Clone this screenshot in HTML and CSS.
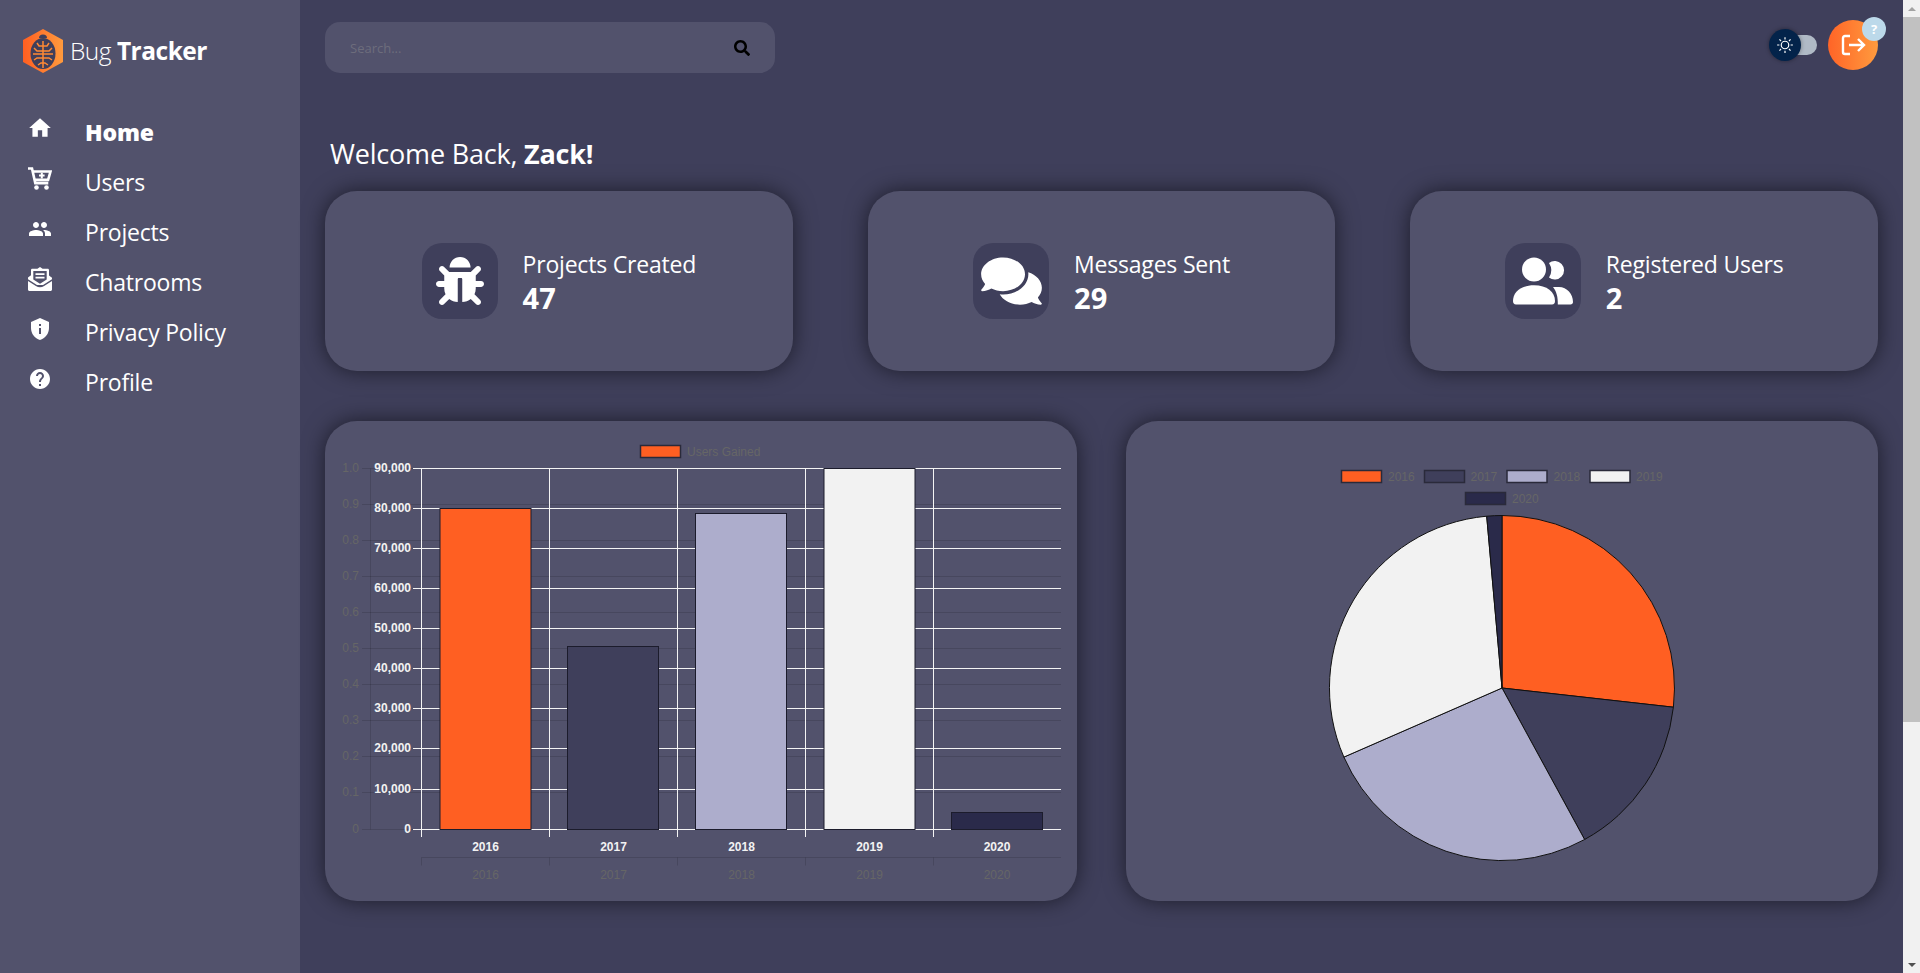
FILE: index.html
```html
<!DOCTYPE html>
<html>
<head>
    <meta charset="UTF-8">
    <meta name="viewport" content="width=device-width, initial-scale=1.0">
    <title>Bug Tracker</title>
    <link rel="stylesheet" href="styles.css">
</head>
<body>
    <!-- Sidebar -->
    <aside class="sidebar">
        <div class="brand">
            <svg class="brand-logo" viewBox="0 0 40 44">
                <defs>
                    <linearGradient id="orange" x1="0" y1="0" x2="1" y2="0">
                        <stop offset="0" stop-color="#ff5f22"/>
                        <stop offset="1" stop-color="#ff9a3d"/>
                    </linearGradient>
                </defs>
                <polygon points="20,0 40,11 40,33 20,44 0,33 0,11" fill="url(#orange)"/>
                <ellipse cx="20" cy="24.5" rx="12.500" ry="15.500" fill="#3f3f5b"/>
                <path d="M16 9a4 3.500 0 0 1 8 0z" fill="#3f3f5b"/>
                <path d="M20 12v27M14 14l2 3h8l2-3M11 19l3 3h12l3-3M10 25h20M11 31l3-2h12l3 2M15 36l3-2h4l3 2" stroke="#ff8a35" stroke-width="1.500" fill="none"/>
            </svg>
            <span class="brand-name">Bug <b>Tracker</b></span>
        </div>
        <nav class="nav">
            <a class="nav-item nav-item-active" href="#home">
                <svg class="nav-icon nav-icon-home" viewBox="0 0 24 24"><path d="M10 20v-6h4v6h5v-8h3L12 3 2 12h3v8z"/></svg>
                <span>Home</span>
            </a>
            <a class="nav-item" href="#users">
                <svg class="nav-icon" viewBox="0 0 24 24">
                    <path class="cart-line" d="M0 1.500h4l3.300 14.600h13M5 4.500h17.500l-2.400 8.400H7.200"/>
                    <path class="cart-plus" d="M13.800 5.800v5.600M11 8.600h5.600"/>
                    <circle cx="8.500" cy="20.500" r="2.300"/>
                    <circle cx="18.500" cy="20.500" r="2.300"/>
                </svg>
                <span>Users</span>
            </a>
            <a class="nav-item" href="#projects">
                <svg class="nav-icon" viewBox="0 0 24 24"><path d="M16 11c1.660 0 2.990-1.340 2.990-3S17.660 5 16 5c-1.660 0-3 1.340-3 3s1.340 3 3 3zm-8 0c1.660 0 2.990-1.340 2.990-3S9.660 5 8 5C6.340 5 5 6.340 5 8s1.340 3 3 3zm0 2c-2.330 0-7 1.170-7 3.500V19h14v-2.500c0-2.330-4.670-3.500-7-3.500zm8 0c-.29 0-.62.02-.97.05 1.160.84 1.970 1.970 1.970 3.450V19h6v-2.500c0-2.330-4.670-3.500-7-3.500z"/></svg>
                <span>Projects</span>
            </a>
            <a class="nav-item" href="#chatrooms">
                <svg class="nav-icon" viewBox="0 0 24 24">
                    <path fill-rule="evenodd" d="M12 0l2.600 1.800h5.100c.8 0 1.300.6 1.300 1.300v5.300l3 2.300v1.500L15 18H9l-9-5.800v-1.700l3-2.300V3.100c0-.7.5-1.300 1.300-1.300h5.100zM5.300 4v8.500l6.700 4.300 6.700-4.300V4z"/>
                    <path d="M7.500 6.200h9V8h-9zM7.500 9.700h9v1.800h-9z"/>
                    <path d="M0 14l7.900 5c2.500 1.600 5.700 1.600 8.200 0L24 14v8.500c0 .9-.7 1.500-1.500 1.500h-21C.7 24 0 23.400 0 22.500z"/>
                </svg>
                <span>Chatrooms</span>
            </a>
            <a class="nav-item" href="#privacy">
                <svg class="nav-icon" viewBox="0 0 24 24"><path d="M12 1 3 5v6c0 5.550 3.840 10.740 9 12 5.160-1.260 9-6.450 9-12V5l-9-4zm1 16h-2v-6h2v6zm0-8h-2V7h2v2z"/></svg>
                <span>Privacy Policy</span>
            </a>
            <a class="nav-item" href="#profile">
                <svg class="nav-icon" viewBox="0 0 24 24"><path d="M12 2C6.480 2 2 6.480 2 12s4.480 10 10 10 10-4.480 10-10S17.520 2 12 2zm1 17h-2v-2h2v2zm2.070-7.750l-.9.920C13.450 12.900 13 13.500 13 15h-2v-.5c0-1.100.45-2.100 1.170-2.830l1.240-1.260c.37-.36.59-.86.59-1.410 0-1.100-.9-2-2-2s-2 .9-2 2H8c0-2.210 1.790-4 4-4s4 1.790 4 4c0 .88-.36 1.680-.93 2.250z"/></svg>
                <span>Profile</span>
            </a>
        </nav>
    </aside>

    <main class="main">
        <!-- Top bar -->
        <div class="topbar">
            <div class="search">
                <span class="search-text">Search...</span>
                <svg class="search-icon" viewBox="0 0 512 512"><path d="M505 442.700L405.300 343c-4.500-4.500-10.600-7-17-7H372c27.600-35.300 44-79.700 44-128C416 93.100 322.900 0 208 0S0 93.100 0 208s93.100 208 208 208c48.300 0 92.700-16.400 128-44v16.300c0 6.400 2.500 12.500 7 17l99.700 99.700c9.400 9.400 24.600 9.400 33.900 0l28.300-28.300c9.400-9.400 9.400-24.600.1-34zM208 336c-70.700 0-128-57.200-128-128 0-70.700 57.200-128 128-128 70.700 0 128 57.200 128 128 0 70.700-57.200 128-128 128z"/></svg>
            </div>
            <div class="top-actions">
                <div class="toggle">
                    <span class="toggle-knob">
                        <svg class="sun" viewBox="0 0 24 24"><circle cx="12" cy="12" r="5"/><path d="M12 1.500v3M12 19.500v3M1.500 12h3M19.500 12h3M4.600 4.600l2.100 2.100M17.300 17.300l2.100 2.100M4.600 19.400l2.100-2.100M17.300 6.700l2.100-2.100"/></svg>
                    </span>
                </div>
                <div class="logout">
                    <svg class="logout-icon" viewBox="0 0 26 24"><path d="M10 3H5a2 2 0 0 0-2 2v14a2 2 0 0 0 2 2h5M9 12h15M18 6l6 6-6 6"/></svg>
                    <span class="logout-badge">?</span>
                </div>
            </div>
        </div>

        <h1 class="welcome">Welcome Back, <b>Zack!</b></h1>

        <!-- Stat cards -->
        <section class="stats">
            <div class="stat-card">
                <div class="stat-icon">
                    <svg class="icon-bug" viewBox="0 0 512 512"><path d="M511.988 288.900c-.478 17.430-15.217 31.100-32.653 31.100H424v16c0 21.864-4.882 42.584-13.600 61.145l60.228 60.228c12.496 12.497 12.496 32.758 0 45.255-12.498 12.497-32.759 12.496-45.256 0l-54.736-54.736C345.886 467.965 314.351 480 280 480V236c0-6.627-5.373-12-12-12h-24c-6.627 0-12 5.373-12 12v244c-34.351 0-65.886-12.035-90.636-32.108l-54.736 54.736c-12.496 12.497-32.758 12.498-45.256 0-12.496-12.497-12.496-32.758 0-45.255l60.228-60.228C92.882 378.584 88 357.864 88 336v-16H32.666C15.230 320 .491 306.330.013 288.900-.484 270.816 14.028 256 32 256h56v-58.745l-46.628-46.628c-12.496-12.497-12.496-32.758 0-45.255 12.498-12.497 32.758-12.497 45.256 0L141.255 160h229.489l54.627-54.627c12.498-12.497 32.758-12.497 45.256 0 12.496 12.497 12.496 32.758 0 45.255L424 197.255V256h56c17.972 0 32.484 14.816 31.988 32.900zM257 0c-61.856 0-112 50.144-112 112h224C369 50.144 318.856 0 257 0z"/></svg>
                </div>
                <div class="stat-text">
                    <span class="stat-label">Projects Created</span>
                    <span class="stat-value">47</span>
                </div>
            </div>
            <div class="stat-card">
                <div class="stat-icon">
                    <svg class="icon-comments" viewBox="0 0 576 512"><path d="M416 192c0-88.400-93.100-160-208-160S0 103.600 0 192c0 34.300 14.100 65.900 38 92-13.400 30.200-35.500 54.200-35.800 54.500-2.200 2.300-2.800 5.700-1.500 8.700S4.800 352 8 352c36.600 0 66.900-12.300 88.700-25 32.200 15.700 70.300 25 111.300 25 114.900 0 208-71.600 208-160zm122 220c23.900-26 38-57.700 38-92 0-66.900-53.500-124.200-129.300-148.100.9 6.600 1.300 13.300 1.300 20.100 0 105.900-107.700 192-240 192-10.800 0-21.300-.8-31.700-1.900C207.800 439.600 281.800 480 368 480c41 0 79.100-9.200 111.300-25 21.800 12.700 52.100 25 88.700 25 3.200 0 6.100-1.900 7.300-4.800 1.300-2.900.7-6.300-1.500-8.700-.3-.3-22.400-24.200-35.800-54.500z"/></svg>
                </div>
                <div class="stat-text">
                    <span class="stat-label">Messages Sent</span>
                    <span class="stat-value">29</span>
                </div>
            </div>
            <div class="stat-card">
                <div class="stat-icon">
                    <svg class="icon-users" viewBox="0 0 60 48">
                        <circle cx="21" cy="12.500" r="12"/>
                        <path d="M36 6A9.300 9.300 0 1 1 36 20.600A13.500 13.500 0 0 0 36 6Z"/>
                        <path d="M0 44C0 35 8 28.300 21 28.300S42 35 42 44C42 46 41 47.500 39 47.500H3C1 47.500 0 46 0 44Z"/>
                        <path d="M40 30H46C54 30 60 37 60 45C60 46.500 59 47.500 57.500 47.500H44.800C45 40 43.500 34.500 40 30Z"/>
                    </svg>
                </div>
                <div class="stat-text">
                    <span class="stat-label">Registered Users</span>
                    <span class="stat-value">2</span>
                </div>
            </div>
        </section>

        <!-- Charts -->
        <section class="charts">
            <div class="chart-card">
                <svg class="chart" viewBox="0 0 752 480">
                    <!-- empty default axes behind the real ones -->
                    <g class="ghost-lines">
                        <path d="M45.500 47.500V408.500M37 47.500H736M37 83.500H736M37 119.500H736M37 155.500H736M37 191.500H736M37 227.500H736M37 263.500H736M37 299.500H736M37 335.500H736M37 371.500H736M37 408.500H736"/>
                        <path d="M96.500 436.500H736M96.500 436.500v8M224.500 436.500v8M352.500 436.500v8M480.500 436.500v8M608.500 436.500v8"/>
                    </g>
                    <g class="ghost-text ghost-y">
                        <text x="34" y="51">1.0</text>
                        <text x="34" y="87">0.9</text>
                        <text x="34" y="123">0.8</text>
                        <text x="34" y="159">0.7</text>
                        <text x="34" y="195">0.6</text>
                        <text x="34" y="231">0.5</text>
                        <text x="34" y="267">0.4</text>
                        <text x="34" y="303">0.3</text>
                        <text x="34" y="339">0.2</text>
                        <text x="34" y="375">0.1</text>
                        <text x="34" y="412">0</text>
                    </g>
                    <g class="ghost-text ghost-x">
                        <text x="160.500" y="458">2016</text>
                        <text x="288.500" y="458">2017</text>
                        <text x="416.500" y="458">2018</text>
                        <text x="544.500" y="458">2019</text>
                        <text x="672" y="458">2020</text>
                    </g>
                    <!-- grid -->
                    <path class="grid" d="M88 47.500H736M88 87.500H736M88 127.500H736M88 167.500H736M88 207.500H736M88 247.500H736M88 287.500H736M88 327.500H736M88 368.500H736M88 408.500H736M96.500 47V416M224.500 47V416M352.500 47V416M480.500 47V416M608.500 47V416"/>
                    <!-- bars -->
                    <rect class="bar" x="115" y="87.500" width="91" height="321" fill="#ff5f22"/>
                    <rect class="bar" x="242.500" y="225.500" width="91" height="183" fill="#3f3f5b"/>
                    <rect class="bar" x="370.500" y="92.500" width="91" height="316" fill="#adadcc"/>
                    <rect class="bar" x="499" y="47.500" width="91" height="361" fill="#f2f2f2"/>
                    <rect class="bar" x="626.500" y="391.500" width="91" height="17" fill="#2a2a4a"/>
                    <!-- axis labels -->
                    <g class="tick tick-y">
                        <text x="86" y="50.500">90,000</text>
                        <text x="86" y="90.500">80,000</text>
                        <text x="86" y="130.500">70,000</text>
                        <text x="86" y="170.500">60,000</text>
                        <text x="86" y="210.500">50,000</text>
                        <text x="86" y="250.500">40,000</text>
                        <text x="86" y="290.500">30,000</text>
                        <text x="86" y="330.500">20,000</text>
                        <text x="86" y="371.500">10,000</text>
                        <text x="86" y="411.500">0</text>
                    </g>
                    <g class="tick tick-x">
                        <text x="160.500" y="430">2016</text>
                        <text x="288.500" y="430">2017</text>
                        <text x="416.500" y="430">2018</text>
                        <text x="544.500" y="430">2019</text>
                        <text x="672" y="430">2020</text>
                    </g>
                    <!-- legend -->
                    <rect class="swatch" x="315.500" y="24.500" width="40" height="12" fill="#ff5f22"/>
                    <text class="legend-text" x="362" y="34.500">Users Gained</text>
                </svg>
            </div>
            <div class="chart-card">
                <svg class="chart" viewBox="0 0 752 480">
                    <rect class="swatch" x="215.500" y="49.500" width="40" height="12" fill="#ff5f22"/>
                    <text class="legend-text" x="262" y="60">2016</text>
                    <rect class="swatch" x="298.500" y="49.500" width="40" height="12" fill="#3f3f5b"/>
                    <text class="legend-text" x="344.500" y="60">2017</text>
                    <rect class="swatch" x="381" y="49.500" width="40" height="12" fill="#adadcc"/>
                    <text class="legend-text" x="427.500" y="60">2018</text>
                    <rect class="swatch" x="464" y="49.500" width="40" height="12" fill="#f2f2f2"/>
                    <text class="legend-text" x="510" y="60">2019</text>
                    <rect class="swatch" x="339.500" y="71.500" width="40" height="12" fill="#2a2a4a"/>
                    <text class="legend-text" x="386" y="82">2020</text>
                    <!-- pie slices -->
                    <path class="slice" d="M376 267L376 94.500A172.500 172.500 0 0 1 547.400 286.200Z" fill="#ff5f22"/>
                    <path class="slice" d="M376 267L547.400 286.200A172.500 172.500 0 0 1 458.600 418.500Z" fill="#3f3f5b"/>
                    <path class="slice" d="M376 267L458.600 418.500A172.500 172.500 0 0 1 217.900 336.100Z" fill="#adadcc"/>
                    <path class="slice" d="M376 267L217.900 336.100A172.500 172.500 0 0 1 360.700 95.200Z" fill="#f2f2f2"/>
                    <path class="slice" d="M376 267L360.700 95.200A172.500 172.500 0 0 1 376 94.500Z" fill="#2a2a4a"/>
                </svg>
            </div>
        </section>
    </main>

    <!-- Window scrollbar -->
    <div class="scrollbar">
        <span class="scroll-arrow scroll-arrow-up"></span>
        <div class="scroll-track"><div class="scroll-thumb"></div></div>
        <span class="scroll-arrow scroll-arrow-down"></span>
    </div>
</body>
</html>
```
FILE: styles.css
```css
html, body {
    height: 100%;
}
body {
    margin: 0;
    display: flex;
    overflow: hidden;
    background-color: #3f3f5b;
    color: white;
    font-family: "Open Sans", "Noto Sans", sans-serif;
}

/* Sidebar */
.sidebar {
    width: 300px;
    flex-shrink: 0;
    background-color: #52526c;
}
.brand {
    display: flex;
    align-items: center;
    gap: 7px;
    padding: 29px 0 0 23px;
}
.brand-logo {
    width: 40px;
    height: 44px;
}
.brand-name {
    font-size: 24.500px;
    letter-spacing: -0.5px;
    font-weight: 300;
    margin-top: -2px;
}
.brand-name b {
    font-weight: 700;
}
.nav {
    display: flex;
    flex-direction: column;
    margin-top: 34px;
}
.nav-item {
    display: flex;
    align-items: center;
    height: 50px;
    padding-left: 28px;
    color: white;
    font-size: 23px;
    letter-spacing: -0.2px;
    text-decoration: none;
}
.nav-item-active {
    font-weight: 800;
}
.nav-icon {
    width: 24px;
    height: 24px;
    margin: -6px 33px 0 0;
    fill: white;
}
.nav-icon-home {
    width: 26px;
    height: 26px;
    margin: -8px 32px 0 -1px;
}
.cart-line {
    fill: none;
    stroke: white;
    stroke-width: 2.600;
}
.cart-plus {
    fill: none;
    stroke: white;
    stroke-width: 2;
}

/* Main column */
.main {
    flex: 1;
    min-width: 0;
    padding: 22px 25px 0;
}
.topbar {
    display: flex;
    justify-content: space-between;
    align-items: flex-start;
}
.search {
    width: 450px;
    height: 51px;
    box-sizing: border-box;
    padding: 0 25px;
    display: flex;
    align-items: center;
    justify-content: space-between;
    background-color: #52526c;
    border-radius: 15px;
}
.search-text {
    font-size: 13px;
    color: #6d6d7c;
}
.search-icon {
    width: 16px;
    height: 16px;
    fill: #000;
}
.top-actions {
    display: flex;
    align-items: center;
    gap: 11px;
    margin-top: -2px;
}
.toggle {
    position: relative;
    width: 40px;
    height: 20px;
    background-color: #b0bac6;
    border-radius: 10px;
}
.toggle-knob {
    position: absolute;
    left: -8px;
    top: -6px;
    width: 32px;
    height: 32px;
    display: flex;
    align-items: center;
    justify-content: center;
    background-color: #03234a;
    border-radius: 50%;
    box-shadow: 0 0 4px rgba(0, 0, 0, .4);
}
.sun {
    width: 18px;
    height: 18px;
    fill: none;
    stroke: white;
    stroke-width: 1.600;
}
.logout {
    position: relative;
    width: 50px;
    height: 50px;
    display: flex;
    align-items: center;
    justify-content: center;
    background: linear-gradient(90deg, #ff6427, #ff9b3e);
    border-radius: 50%;
}
.logout-icon {
    width: 26px;
    height: 24px;
    fill: none;
    stroke: white;
    stroke-width: 2.400;
}
.logout-badge {
    position: absolute;
    top: -3px;
    right: -8px;
    width: 24px;
    height: 24px;
    line-height: 24px;
    text-align: center;
    font-size: 13px;
    font-weight: 700;
    background-color: #bcd9ea;
    border-radius: 50%;
}
.welcome {
    margin: 61px 0 0 5px;
    height: 57px;
    font-size: 27px;
    font-weight: 400;
    letter-spacing: -0.2px;
    line-height: 40px;
}

/* Stat cards */
.stats {
    display: grid;
    grid-template-columns: repeat(3, 1fr);
    gap: 75px;
}
.stat-card {
    height: 180px;
    display: flex;
    align-items: center;
    justify-content: center;
    gap: 25px;
    background-color: #52526c;
    border-radius: 32px;
    box-shadow: 0 0 22px rgba(0, 0, 0, .55);
}
.stat-icon {
    width: 76px;
    height: 76px;
    display: flex;
    align-items: center;
    justify-content: center;
    background-color: #3f3f5b;
    border-radius: 20px;
}
.stat-icon svg {
    fill: white;
}
.icon-bug {
    width: 48px;
    height: 48px;
}
.icon-comments {
    width: 61px;
    height: 54px;
}
.icon-users {
    width: 60px;
    height: 48px;
}
.stat-text {
    display: flex;
    flex-direction: column;
}
.stat-label {
    font-size: 23px;
    letter-spacing: -0.2px;
    line-height: 34px;
}
.stat-value {
    font-size: 29px;
    font-weight: 700;
    line-height: 34px;
}

/* Charts */
.charts {
    display: grid;
    grid-template-columns: 752px 752px;
    gap: 49px;
    margin-top: 50px;
}
.chart-card {
    height: 480px;
    background-color: #52526c;
    border-radius: 32px;
    box-shadow: 0 0 22px rgba(0, 0, 0, .55);
}
.chart {
    display: block;
    width: 100%;
    height: 100%;
    font-family: "Liberation Sans", Arial, sans-serif;
    font-size: 12px;
}
.ghost-lines path {
    fill: none;
    stroke: rgba(0, 0, 0, .13);
}
.ghost-text text {
    fill: #666;
}
.ghost-y text, .tick-y text {
    text-anchor: end;
}
.ghost-x text, .tick-x text {
    text-anchor: middle;
}
.grid {
    fill: none;
    stroke: #f4f4f4;
}
.bar {
    stroke: #1c1c2c;
}
.slice {
    stroke: #111;
}
.tick text {
    fill: #f2f2f2;
    font-weight: 700;
}
.swatch {
    stroke: #2a2a3a;
    stroke-width: 1.500;
}
.legend-text {
    fill: #666;
}

/* Scrollbar */
.scrollbar {
    width: 17px;
    flex-shrink: 0;
    display: flex;
    flex-direction: column;
    background-color: #f1f1f1;
}
.scroll-arrow {
    height: 17px;
    display: flex;
    align-items: center;
    justify-content: center;
}
.scroll-arrow::before {
    content: "";
    border-left: 4px solid transparent;
    border-right: 4px solid transparent;
}
.scroll-arrow-up::before {
    border-bottom: 4px solid #a3a3a3;
}
.scroll-arrow-down::before {
    border-top: 4px solid #505050;
}
.scroll-track {
    flex: 1;
}
.scroll-thumb {
    height: 705px;
    background-color: #c1c1c1;
}
```
